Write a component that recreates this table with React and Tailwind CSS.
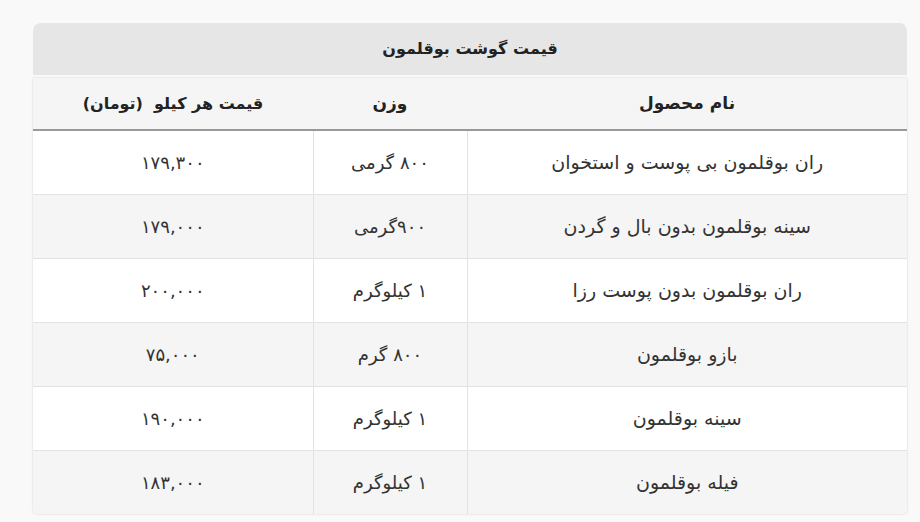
const rows = [
  { name: 'ران بوقلمون بی پوست و استخوان', weight: '۸۰۰ گرمی', price: '۱۷۹,۳۰۰' },
  { name: 'سینه بوقلمون بدون بال و گردن', weight: '۹۰۰گرمی', price: '۱۷۹,۰۰۰' },
  { name: 'ران بوقلمون بدون پوست رزا', weight: '۱ کیلوگرم', price: '۲۰۰,۰۰۰' },
  { name: 'بازو بوقلمون', weight: '۸۰۰ گرم', price: '۷۵,۰۰۰' },
  { name: 'سینه بوقلمون', weight: '۱ کیلوگرم', price: '۱۹۰,۰۰۰' },
  { name: 'فیله بوقلمون', weight: '۱ کیلوگرم', price: '۱۸۳,۰۰۰' },
];

export default function App() {
  return (
    <div
      dir="rtl"
      className="min-h-[522px] bg-[#f9f9f9] pt-[23px] pr-[13px] pl-[33px] text-[18px] text-[#333]"
      style={{ fontFamily: '"DejaVu Sans", sans-serif' }}
    >
      <div className="w-[874px]">
        <div className="flex h-[52px] items-center justify-center rounded-t-[8px] bg-[#e6e6e6] text-[16px] font-bold text-[#222]">
          قیمت گوشت بوقلمون
        </div>
        <div className="mt-[3px] overflow-hidden rounded-b-[4px] shadow-[0_0_2px_rgba(0,0,0,0.2)]">
          <table className="w-full border-collapse text-center">
            <thead>
              <tr className="h-[52px] border-b-2 border-[#999] bg-[#f5f5f5] text-[17px] font-bold text-[#222]">
                <th className="w-[440px] font-bold">نام محصول</th>
                <th className="w-[154px] font-bold">وزن</th>
                <th className="w-[280px] text-[16px] font-bold">قیمت هر کیلو&nbsp; (تومان)</th>
              </tr>
            </thead>
            <tbody>
              {rows.map((r, i) => (
                <tr
                  key={i}
                  className={`h-[64px] border-b border-[#e2e2e2] last:border-b-0 ${i % 2 ? 'bg-[#f5f5f5]' : 'bg-white'}`}
                >
                  <td className="border-l border-[#e2e2e2] text-[19px]">{r.name}</td>
                  <td className="border-l border-[#e2e2e2]">{r.weight}</td>
                  <td>{r.price}</td>
                </tr>
              ))}
            </tbody>
          </table>
        </div>
      </div>
    </div>
  );
}
